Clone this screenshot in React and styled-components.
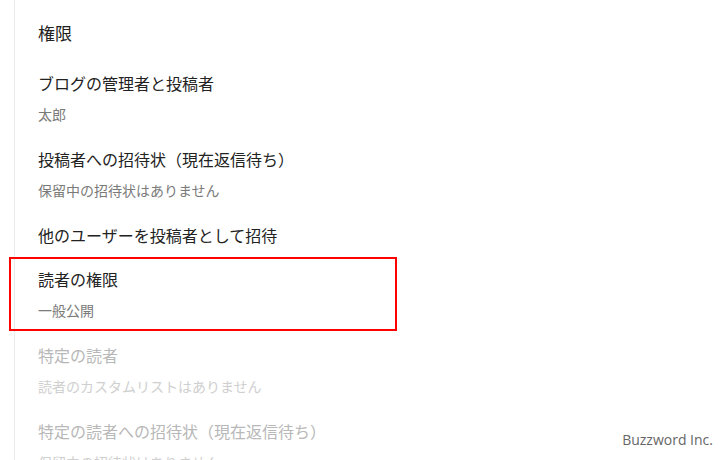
import React from 'react'
import styled, { createGlobalStyle } from 'styled-components'

const GlobalStyle = createGlobalStyle`
  html, body {
    margin: 0;
    padding: 0;
    background: #fff;
    overflow: hidden;
  }
  body {
    font-family: "Noto Sans CJK JP", "Noto Sans", sans-serif;
  }
`

const Page = styled.div`
  position: relative;
  display: flex;
  width: 728px;
  height: 460px;
  overflow: hidden;
`

const Rail = styled.div`
  width: 14px;
  flex-shrink: 0;
  border-right: 1px solid #ebebeb;
`

const Content = styled.div`
  padding-left: 23px;
  flex: 1;
`

const Heading = styled.div`
  margin: 21px 0 16px;
  font-size: 17px;
  line-height: 24px;
  color: #212121;
`

const Item = styled.div`
  position: relative;
  padding: 10px 0;

  &::after {
    content: '';
    display: ${p => (p.highlight ? 'block' : 'none')};
    position: absolute;
    top: 0;
    left: -29px;
    width: 388px;
    height: 74px;
    box-sizing: border-box;
    border: 2px solid #ff0000;
  }
`

const Title = styled.div`
  font-size: 16px;
  line-height: 24px;
  color: ${p => (p.disabled ? '#b8b8b8' : '#222')};
`

const Sub = styled.div`
  margin: 9px 0 3px;
  font-size: 14px;
  line-height: 20px;
  color: ${p => (p.disabled ? '#cfcfcf' : '#7a7a7a')};
`

const Watermark = styled.div`
  position: absolute;
  right: 15px;
  bottom: 11px;
  font-family: "Open Sans", "Liberation Sans", sans-serif;
  font-size: 14px;
  font-weight: 500;
  color: #666;
`

const items = [
  { title: 'ブログの管理者と投稿者', sub: '太郎' },
  { title: '投稿者への招待状（現在返信待ち）', sub: '保留中の招待状はありません' },
  { title: '他のユーザーを投稿者として招待' },
  { title: '読者の権限', sub: '一般公開', highlight: true },
  { title: '特定の読者', sub: '読者のカスタムリストはありません', disabled: true },
  { title: '特定の読者への招待状（現在返信待ち）', sub: '保留中の招待状はありません', disabled: true }
]

const App = () => {
  return (
    <Page>
      <GlobalStyle />
      <Rail />
      <Content>
        <Heading>権限</Heading>
        {items.map((item, i) => (
          <Item key={`item-${i}`} highlight={item.highlight}>
            <Title disabled={item.disabled}>{item.title}</Title>
            {item.sub && <Sub disabled={item.disabled}>{item.sub}</Sub>}
          </Item>
        ))}
      </Content>
      <Watermark>Buzzword Inc.</Watermark>
    </Page>
  )
}

export default App
